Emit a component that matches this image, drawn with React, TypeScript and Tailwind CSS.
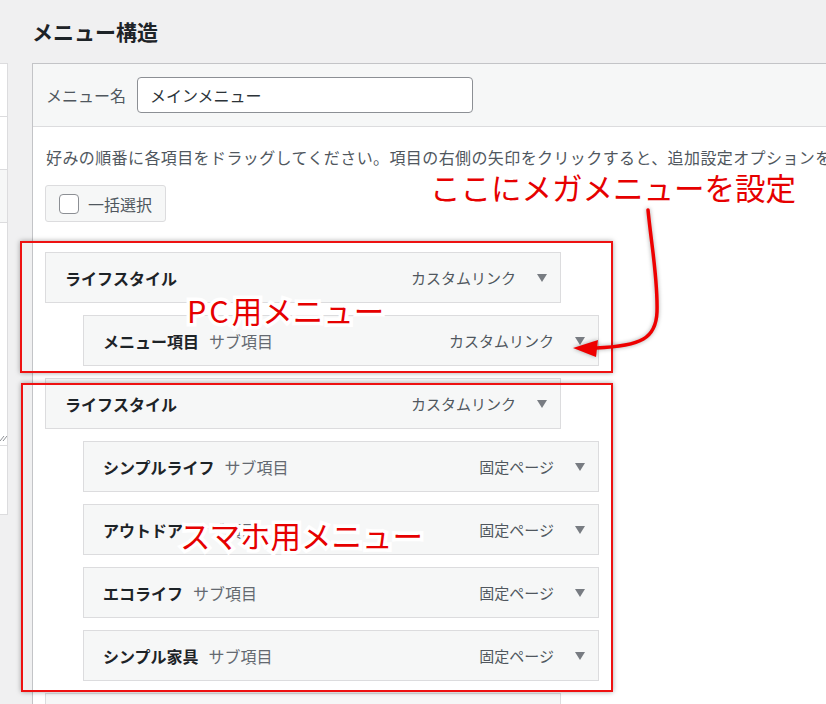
import React from "react";

const Caret = () => (
  <svg width="10" height="8" viewBox="0 0 10 8" className="ml-[21px] shrink-0">
    <polygon points="0,0 10,0 5,8" fill="#787c82" />
  </svg>
);

type Item = { title: string; sub?: boolean; type: string; blank?: boolean };

const items: Item[] = [
  { title: "ライフスタイル", type: "カスタムリンク" },
  { title: "メニュー項目", sub: true, type: "カスタムリンク" },
  { title: "ライフスタイル", type: "カスタムリンク" },
  { title: "シンプルライフ", sub: true, type: "固定ページ" },
  { title: "アウトドア", sub: true, type: "固定ページ" },
  { title: "エコライフ", sub: true, type: "固定ページ" },
  { title: "シンプル家具", sub: true, type: "固定ページ" },
  { title: "", type: "", blank: true },
];

function MenuItem({ item }: { item: Item }) {
  return (
    <div
      className={
        "h-[51px] w-[516px] mb-[12px] border border-[#dcdcde] bg-[#f6f7f7] flex items-center justify-between pl-[19px] pr-[13px] " +
        (item.sub ? "ml-[50px]" : "ml-[12px]")
      }
    >
      {!item.blank && (
        <>
          <div className="flex items-center">
            <span className="text-[16px] font-bold text-[#1d2327] leading-none">{item.title}</span>
            {item.sub && (
              <span className="ml-[10px] text-[16px] text-[#646970] leading-none">サブ項目</span>
            )}
          </div>
          <div className="flex items-center">
            <span className="text-[15px] text-[#50575e] leading-none">{item.type}</span>
            <Caret />
          </div>
        </>
      )}
    </div>
  );
}

const redText =
  "absolute text-[30.5px] leading-[31px] text-[#e60000] whitespace-nowrap [-webkit-text-stroke:7px_#fff] [paint-order:stroke_fill] [text-shadow:0_0_3px_rgba(255,255,255,0.9)]";

export default function App() {
  return (
    <div
      className="relative w-[826px] h-[704px] overflow-hidden bg-[#f0f0f1] text-[#3c434a]"
      style={{ fontFamily: '"Noto Sans CJK JP", "Noto Sans", sans-serif' }}
    >
      <div className="h-[63px] flex items-center pl-[32px]">
        <h2 className="text-[21px] font-bold text-[#1d2327] leading-none">メニュー構造</h2>
      </div>

      <div className="flex items-start">
        {/* left sidebar sliver */}
        <div className="w-[8px] h-[452px] bg-white border-r border-b border-t border-[#dcdcde] flex flex-col shrink-0">
          <div className="h-[53px] border-b border-[#dcdcde]" />
          <div className="h-[53px] border-b border-[#dcdcde]" />
          <div className="h-[53px] border-b border-[#dcdcde] bg-[#f6f7f7]" />
          <div className="h-[223px] border-b border-[#dcdcde]" />
          <div className="flex-1 relative">
            <svg width="7" height="8" viewBox="0 0 7 8" className="absolute left-0 top-[-12px]">
              <line x1="0" y1="7" x2="4" y2="2" stroke="#8c8f94" strokeWidth="1" />
              <line x1="3" y1="7" x2="7" y2="2" stroke="#8c8f94" strokeWidth="1" />
            </svg>
          </div>
        </div>

        {/* main panel */}
        <div className="ml-[24px] w-[820px] shrink-0 border border-[#c3c4c7] bg-white h-[700px]">
          <div className="h-[63px] bg-[#f6f7f7] border-b border-[#dcdcde] flex items-center pl-[13px]">
            <span className="text-[16px] text-[#50575e]">メニュー名</span>
            <div className="ml-[11px] w-[336px] h-[36px] bg-white border border-[#8c8f94] rounded-[4px] flex items-center pl-[12px]">
              <span className="text-[16px] text-[#2c3338]">メインメニュー</span>
            </div>
          </div>

          <div className="pt-[18px]">
            <p className="pl-[13px] text-[16px] leading-[24px] text-[#50575e] whitespace-nowrap tracking-[0.4px]">
              好みの順番に各項目をドラッグしてください。項目の右側の矢印をクリックすると、追加設定オプションを表示します。
            </p>
            <div className="ml-[12px] mt-[16px] w-[121px] h-[37px] bg-[#f6f7f7] border border-[#dcdcde] rounded-[3px] flex items-center pl-[13px]">
              <div className="w-[20px] h-[20px] bg-white border border-[#8c8f94] rounded-[4px]" />
              <span className="ml-[9px] text-[16px] text-[#50575e]">一括選択</span>
            </div>

            <div className="mt-[30px]">
              {items.map((it, i) => (
                <MenuItem key={i} item={it} />
              ))}
            </div>
          </div>
        </div>
      </div>

      {/* red annotation boxes */}
      <div className="absolute left-[20px] top-[241px] w-[593px] h-[132px] border-2 border-[#ee1111] shadow-[0_0_5px_rgba(0,0,0,0.35)]" />
      <div className="absolute left-[21px] top-[383px] w-[592px] h-[309px] border-2 border-[#ee1111] shadow-[0_0_5px_rgba(0,0,0,0.35)]" />

      {/* red annotation texts */}
      <div className={redText + " left-[430px] top-[172px]"}>ここにメガメニューを設定</div>
      <div className={redText + " left-[187px] top-[295px]"}>
        <span className="tracking-[3px]">PC</span>用メニュー
      </div>
      <div className={redText + " left-[180px] top-[520px]"}>スマホ用メニュー</div>

      {/* curved arrow */}
      <svg
        className="absolute left-0 top-0 pointer-events-none"
        width="826"
        height="704"
        viewBox="0 0 826 704"
        style={{ filter: "drop-shadow(0 0 2px rgba(0,0,0,0.35))" }}
      >
        <path
          d="M648 210 C652 250 658 280 657 312 C656 338 642 346 596 348"
          fill="none"
          stroke="#ee0000"
          strokeWidth="3.5"
          strokeLinecap="round"
        />
        <polygon points="573,348 598,340 596,357" fill="#ee0000" />
      </svg>
    </div>
  );
}
